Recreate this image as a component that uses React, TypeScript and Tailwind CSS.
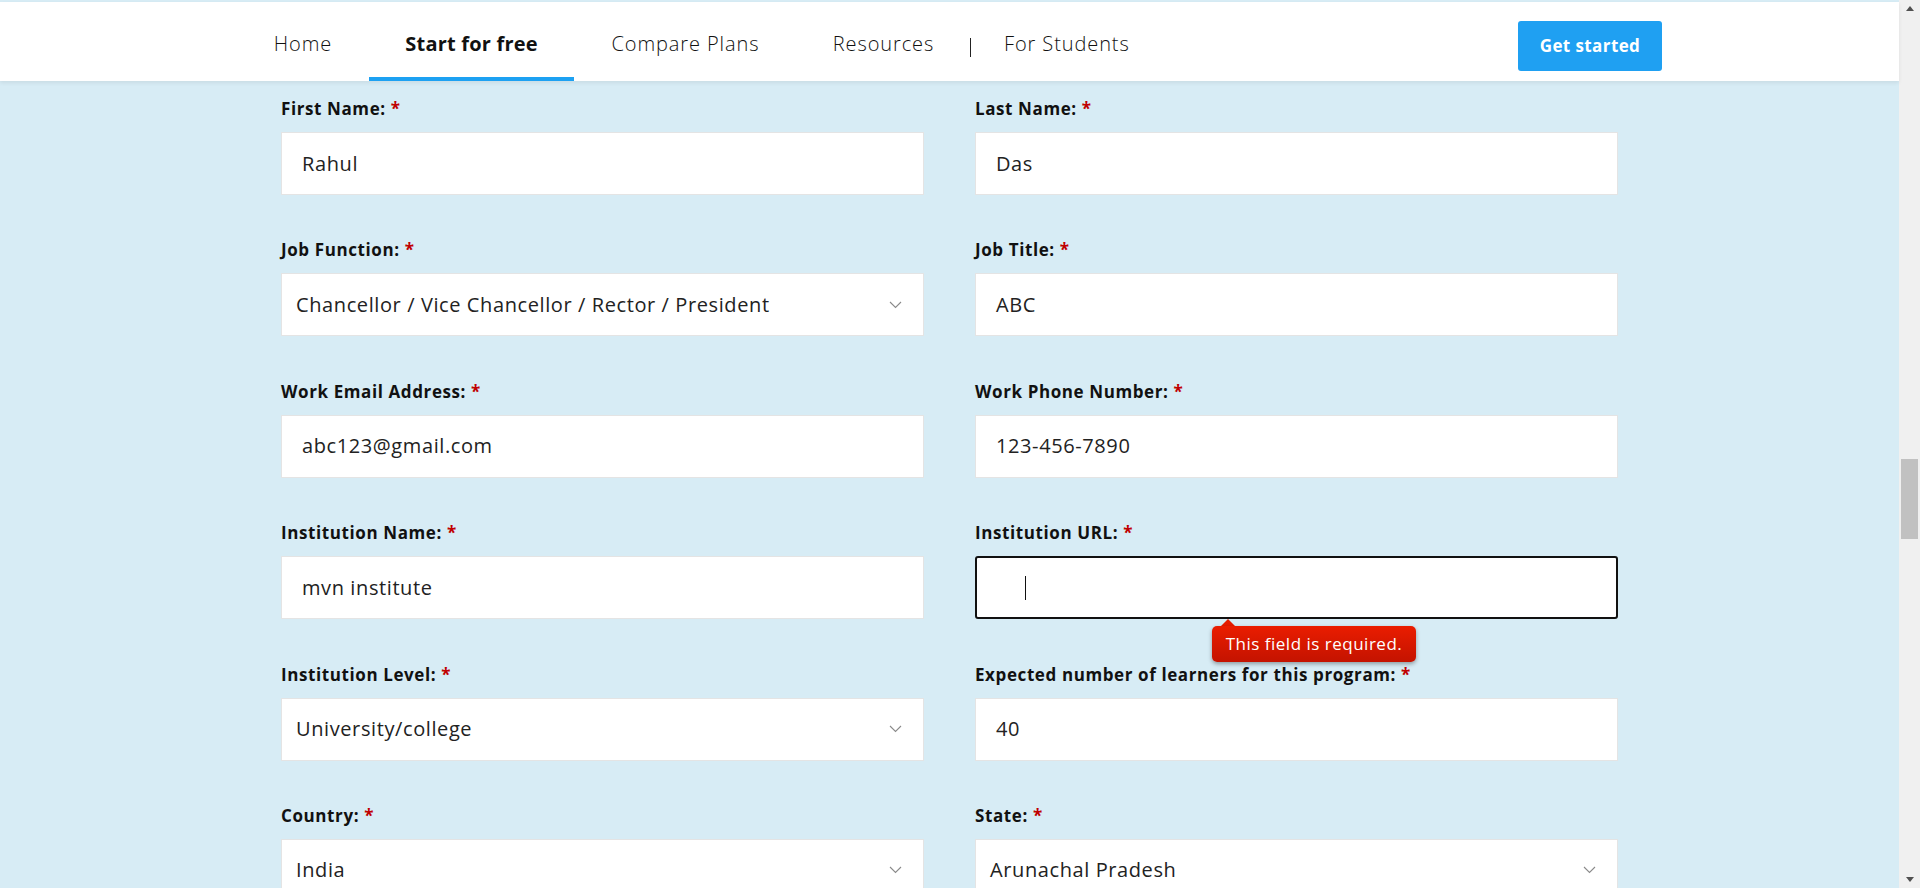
import React from 'react';

type Field = {
    label: string;
    value: string;
    kind: 'input' | 'select' | 'focused';
};

const rows: Field[][] = [
    [
        { label: 'First Name:', value: 'Rahul', kind: 'input' },
        { label: 'Last Name:', value: 'Das', kind: 'input' },
    ],
    [
        { label: 'Job Function:', value: 'Chancellor / Vice Chancellor / Rector / President', kind: 'select' },
        { label: 'Job Title:', value: 'ABC', kind: 'input' },
    ],
    [
        { label: 'Work Email Address:', value: 'abc123@gmail.com', kind: 'input' },
        { label: 'Work Phone Number:', value: '123-456-7890', kind: 'input' },
    ],
    [
        { label: 'Institution Name:', value: 'mvn institute', kind: 'input' },
        { label: 'Institution URL:', value: '', kind: 'focused' },
    ],
    [
        { label: 'Institution Level:', value: 'University/college', kind: 'select' },
        { label: 'Expected number of learners for this program:', value: '40', kind: 'input' },
    ],
    [
        { label: 'Country:', value: 'India', kind: 'select' },
        { label: 'State:', value: 'Arunachal Pradesh', kind: 'select' },
    ],
];

const navItems = [
    { name: 'Home', w: 'w-[132px]', active: false },
    { name: 'Start for free', w: 'w-[205px]', active: true },
    { name: 'Compare Plans', w: 'w-[223px]', active: false },
    { name: 'Resources', w: 'w-[173px]', active: false },
];

const Chevron = () => (
    <svg width="13" height="8" viewBox="0 0 13 8" fill="none">
        <polyline points="1,1 6.5,6.5 12,1" stroke="#8a8a8a" strokeWidth="1.1" />
    </svg>
);

const FormField: React.FC<{ field: Field }> = ({ field }) => (
    <div className="flex flex-col">
        <label className="h-[20px] leading-[20px] pt-[1px] text-[17px] tracking-[0.6px] font-bold text-[#111] mb-[14px]">
            {field.label} <span className="text-[#c00000]">*</span>
        </label>

        {field.kind === 'input' && (
            <div className="h-[63px] bg-white border border-[#e4e4e4] flex items-center pl-[20px] text-[20px] tracking-[0.6px] text-[#222]">
                {field.value}
            </div>
        )}

        {field.kind === 'select' && (
            <div className="h-[63px] bg-white border border-[#e4e4e4] flex items-center justify-between pl-[14px] pr-[21px] text-[20px] tracking-[0.6px] text-[#222]">
                <span>{field.value}</span>
                <Chevron />
            </div>
        )}

        {field.kind === 'focused' && (
            <div className="relative">
                <div className="h-[63px] bg-white border-2 border-[#111] rounded-[3px] flex items-center pl-[48px]">
                    <div className="w-px h-[24px] bg-[#111]" />
                </div>
                {/* validation tooltip */}
                <div className="absolute left-[237px] top-[63px] z-10">
                    <div className="ml-[9px] w-0 h-0 border-l-[7px] border-r-[7px] border-b-[7px] border-l-transparent border-r-transparent border-b-[#e61c00]" />
                    <div className="w-[204px] h-[36px] rounded-[5px] bg-gradient-to-b from-[#ea1d00] to-[#c41300] shadow-[0_2px_4px_rgba(0,0,0,0.35)] flex items-center justify-center text-white text-[17px] tracking-[0.5px]">
                        This field is required.
                    </div>
                </div>
            </div>
        )}
    </div>
);

export default function App() {
    return (
        <div
            className="w-[1920px] h-[888px] flex overflow-hidden bg-[#d7ecf5]"
            style={{ fontFamily: '"Open Sans", "Liberation Sans", sans-serif' }}
        >
            <div className="flex-1 flex flex-col min-w-0">
                {/* Navbar */}
                <div className="h-[2px] shrink-0" />
                <div className="h-[79px] shrink-0 bg-white shadow-[0_2px_4px_rgba(0,0,0,0.07)] flex relative z-10 pl-[237px]">
                    {navItems.map((item) => (
                        <div key={item.name} className={`${item.w} h-full flex flex-col`}>
                            <div className={`flex-1 flex items-center justify-center pt-[8px] text-[20px] ${item.active ? 'font-bold tracking-[0.2px] text-[#111]' : 'font-light tracking-[0.9px] text-[#111]'}`}>
                                {item.name}
                            </div>
                            <div className={`h-[4px] ${item.active ? 'bg-[#1da1f2]' : ''}`} />
                        </div>
                    ))}
                    <div className="w-px h-[19px] bg-[#222] mt-[36px]" />
                    <div className="pl-[33px] flex items-center pt-[8px] pb-[4px] text-[20px] font-light tracking-[0.9px] text-[#111]">For Students</div>
                    <button className="ml-auto mr-[237px] mt-[19px] w-[144px] h-[50px] rounded-[3px] bg-[#1fa0f2] text-white font-bold text-[17px] tracking-[0.4px]">
                        Get started
                    </button>
                </div>

                {/* Form */}
                <div className="pt-[17px] px-[281px] grid grid-cols-2 gap-x-[51px] gap-y-[44.4px]">
                    {rows.flat().map((f) => (
                        <FormField key={f.label} field={f} />
                    ))}
                </div>
            </div>

            {/* Scrollbar */}
            <div className="w-[21px] shrink-0 bg-[#f0f0f0] flex flex-col items-center">
                <div className="h-[17px] flex items-center justify-center">
                    <div className="w-0 h-0 border-l-[4.5px] border-r-[4.5px] border-b-[5px] border-l-transparent border-r-transparent border-b-[#505050]" />
                </div>
                <div className="flex-1 w-full px-[2px]">
                    <div className="mt-[442px] h-[80px] w-full bg-[#c1c1c1]" />
                </div>
                <div className="h-[17px] flex items-center justify-center">
                    <div className="w-0 h-0 border-l-[4.5px] border-r-[4.5px] border-t-[5px] border-l-transparent border-r-transparent border-t-[#505050]" />
                </div>
            </div>
        </div>
    );
}
